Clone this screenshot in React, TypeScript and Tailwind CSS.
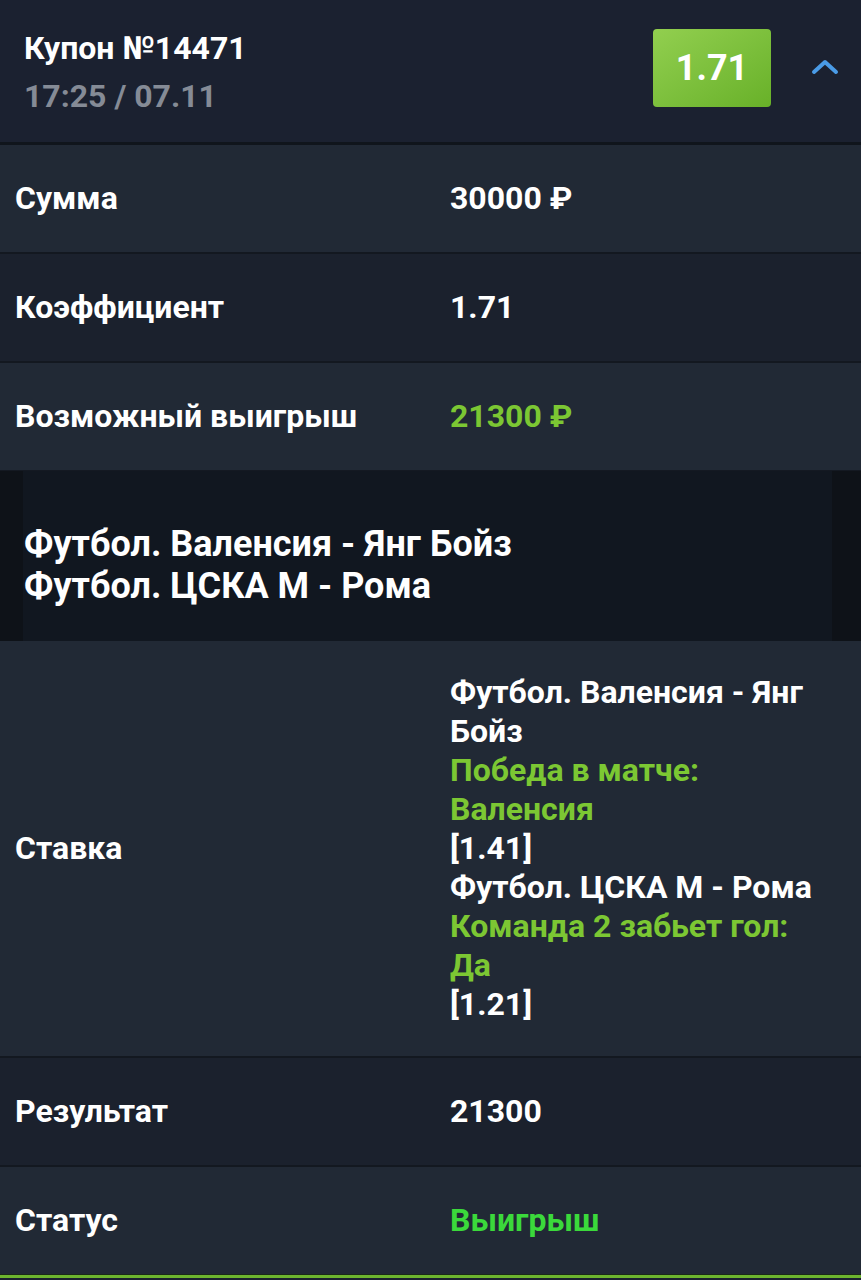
const rows = [
  { label: "Сумма", value: "30000 ₽", tone: "text-white", bg: "bg-[#212935]" },
  { label: "Коэффициент", value: "1.71", tone: "text-white", bg: "bg-[#1b212d]" },
  { label: "Возможный выигрыш", value: "21300 ₽", tone: "text-[#7cc733]", bg: "bg-[#212935]" },
];

const Row = ({ label, value, tone, bg }: { label: string; value: string; tone: string; bg: string }) => (
  <div className={`flex items-center h-[107px] ${bg}`}>
    <div className="w-[450px] pl-[15px]">{label}</div>
    <div className={tone}>{value}</div>
  </div>
);

const Sep = () => <div className="h-[2px] bg-[#131820]" />;

const App = () => {
  return (
    <div
      className="w-[861px] h-[1280px] bg-[#1b2130] text-white font-bold text-[32px] leading-[39px] overflow-hidden"
      style={{ fontFamily: "Roboto, 'Noto Sans', sans-serif" }}
    >
      <header className="h-[142px] flex items-center pl-[24px] pr-[22px] bg-[#1b2130]">
        <div className="flex-1 mt-[1px]">
          <div className="leading-[48px]">Купон №14471</div>
          <div className="leading-[48px] text-[#858b96]">17:25 / 07.11</div>
        </div>
        <div className="w-[118px] h-[78px] -mt-[6px] rounded-[4px] bg-gradient-to-br from-[#92cf4f] to-[#68b128] flex items-center justify-center text-[36px]">
          1.71
        </div>
        <svg className="ml-[40px] -mt-[9px]" width="28" height="18" viewBox="0 0 28 18" fill="none">
          <path d="M3 14 L14 4 L25 14" stroke="#4a9be6" strokeWidth="4" strokeLinecap="round" strokeLinejoin="round" />
        </svg>
      </header>
      <div className="h-[3px] bg-[#10151c]" />

      <Row {...rows[0]} />
      <Sep />
      <Row {...rows[1]} />
      <Sep />
      <Row {...rows[2]} />

      <div className="bg-[#0e1218] pl-[23px] pr-[29px] border-t border-[#141922]">
        <div className="h-[170px] bg-[#111720] flex flex-col justify-center pl-[1px] text-[36px] leading-[42px] pt-[18px]">
          <div>Футбол. Валенсия - Янг Бойз</div>
          <div>Футбол. ЦСКА М - Рома</div>
        </div>
      </div>

      <div className="flex items-center h-[415px] bg-[#212935]">
        <div className="w-[450px] pl-[15px]">Ставка</div>
        <div className="w-[380px]">
          <div>Футбол. Валенсия - Янг Бойз</div>
          <div className="text-[#7cc733]">Победа в матче: Валенсия</div>
          <div>[1.41]</div>
          <div>Футбол. ЦСКА М - Рома</div>
          <div className="text-[#7cc733]">Команда 2 забьет гол: Да</div>
          <div>[1.21]</div>
        </div>
      </div>
      <Sep />
      <Row label="Результат" value="21300" tone="text-white" bg="bg-[#1b212d]" />
      <Sep />
      <Row label="Статус" value="Выигрыш" tone="text-[#3bd93b]" bg="bg-[#212935]" />
      <div className="h-[1px] bg-[#1a2a18]" />
      <div className="h-[3px] bg-[#6db52f]" />
    </div>
  );
};

export default App;
